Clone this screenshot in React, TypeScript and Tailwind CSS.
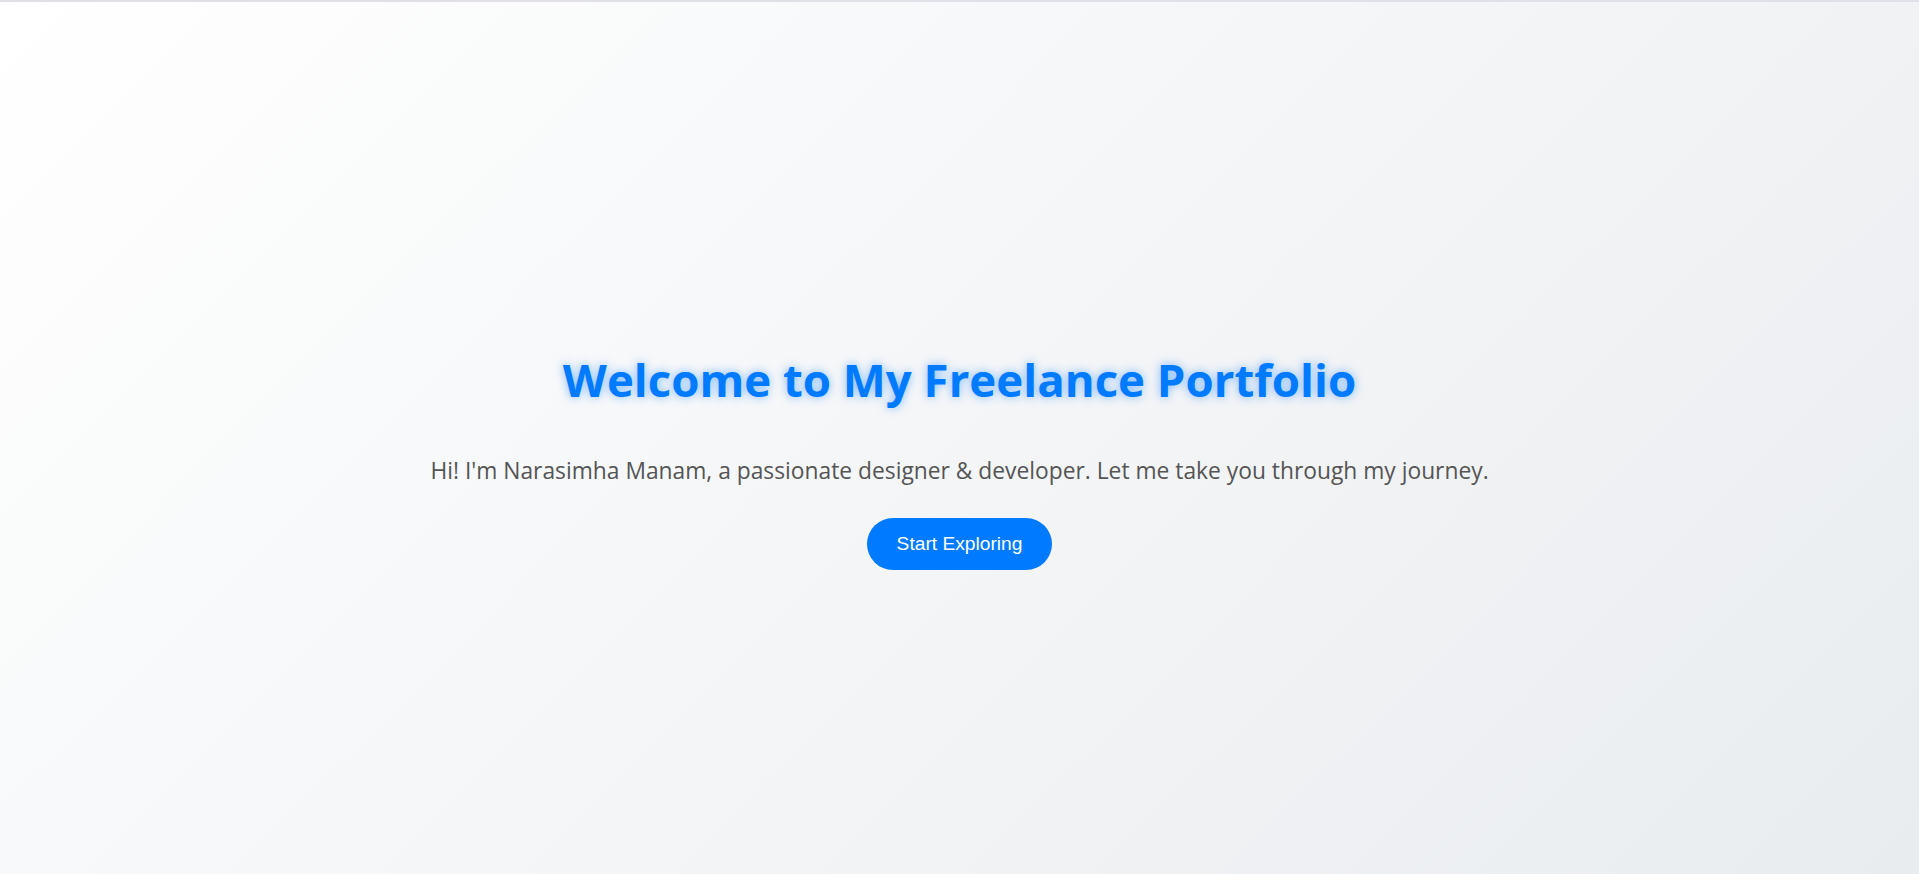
import React from "react";

export default function App() {
  return (
    <div className="flex h-[874px] w-full flex-col bg-[linear-gradient(135deg,#ffffff,#e9ecef)] font-['Open_Sans','Noto_Sans',sans-serif]">
      <div className="h-[2px] w-full bg-[#e0e0e6]" />
      <div className="flex flex-1 flex-col items-center pt-[345px]">
        <h1 className="text-[45.6px] font-bold leading-[64px] text-[#007bff] [text-shadow:0_0_10px_rgba(0,123,255,0.5)]">
          Welcome to My Freelance Portfolio
        </h1>
        <p className="mt-[44px] text-[22.8px] leading-[32px] text-[#555555]">
          Hi! I'm Narasimha Manam, a passionate designer &amp; developer. Let me take you through my journey.
        </p>
        <button className="mt-[31px] rounded-full bg-[#007bff] px-[30px] py-[15px] font-['Liberation_Sans',Arial,sans-serif] text-[19.2px] leading-[22px] text-white">
          Start Exploring
        </button>
      </div>
    </div>
  );
}
